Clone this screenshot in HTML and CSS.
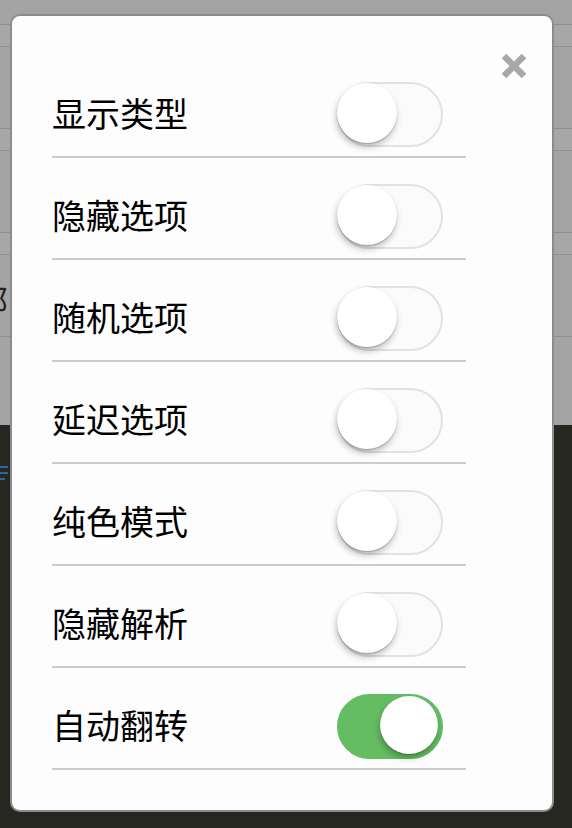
FILE: index.html
```html
<!DOCTYPE html>
<html lang="zh">
<head>
    <meta charset="UTF-8">
    <meta name="viewport" content="width=device-width, initial-scale=1.0">
    <title>设置</title>
    <link rel="stylesheet" href="styles.css">
</head>
<body>
    <!-- 背后的页面 -->
    <div class="page">
        <div class="list">
            <div class="list-top"></div>
            <div class="band"></div>
            <div class="item"></div>
            <div class="band"></div>
            <div class="item"></div>
            <div class="band"></div>
            <div class="item"><span class="item-text">全部</span></div>
            <div class="tail"></div>
        </div>
        <div class="footer">
            <span class="footer-icon"><i></i><i></i><i></i></span>
        </div>
    </div>

    <!-- 设置弹窗 -->
    <div class="modal">
        <span class="close">
            <svg width="28" height="28" viewBox="0 0 28 28">
                <path d="M4 4 L24 24 M24 4 L4 24" stroke="#a8a8a8" stroke-width="6.5" fill="none"/>
            </svg>
        </span>
        <div class="rows">
            <div class="row"><span class="label">显示类型</span><span class="switch"><small></small></span></div>
            <div class="row"><span class="label">隐藏选项</span><span class="switch"><small></small></span></div>
            <div class="row"><span class="label">随机选项</span><span class="switch"><small></small></span></div>
            <div class="row"><span class="label">延迟选项</span><span class="switch"><small></small></span></div>
            <div class="row"><span class="label">纯色模式</span><span class="switch"><small></small></span></div>
            <div class="row"><span class="label">隐藏解析</span><span class="switch"><small></small></span></div>
            <div class="row"><span class="label">自动翻转</span><span class="switch on"><small></small></span></div>
        </div>
    </div>
</body>
</html>
```

FILE: styles.css
```css
html, body {
    margin: 0;
    padding: 0;
}
body {
    font-family: "Noto Sans CJK SC", "Noto Sans", sans-serif;
    background-color: #272722;
    width: 572px;
    height: 828px;
    overflow: hidden;
}
.page {
    display: flex;
    flex-direction: column;
    height: 828px;
}
.list {
    background-color: #a4a4a4;
    height: 425px;
    display: flex;
    flex-direction: column;
}
.list-top {
    height: 24px;
    border-bottom: 1px solid #8f8f8f;
}
.band {
    height: 21px;
    background-color: #a7a7a7;
    border-bottom: 1px solid #8f8f8f;
}
.item {
    height: 81px;
    border-bottom: 1px solid #8f8f8f;
    display: flex;
    align-items: center;
    overflow: hidden;
}
.item-text {
    font-size: 32px;
    color: #222;
    margin-left: -56px;
    margin-top: 6px;
}
.tail {
    flex: 1;
}
.footer {
    flex: 1;
    background-color: #272722;
}
.footer-icon {
    display: flex;
    flex-direction: column;
    gap: 4px;
    margin-top: 41px;
    width: 8px;
}
.footer-icon i {
    display: block;
    height: 2px;
    background-color: #2f62a8;
}
.footer-icon i:last-child {
    width: 5px;
}

/* 弹窗 */
.modal {
    position: absolute;
    top: 14px;
    left: 10px;
    width: 540px;
    height: 794px;
    background-color: #fdfdfd;
    border: 2px solid #8c8c8c;
    border-radius: 10px;
}
.close {
    position: absolute;
    top: 36px;
    right: 24px;
    width: 28px;
    height: 28px;
}
.close svg {
    display: block;
}
.rows {
    padding: 40px 0 0 40px;
    width: 414px;
}
.row {
    display: flex;
    align-items: center;
    justify-content: space-between;
    height: 102px;
    padding-top: 26px;
    padding-bottom: 9px;
    box-sizing: border-box;
    border-bottom: 2px solid #cccccc;
}
.label {
    font-size: 34px;
    color: #000;
    line-height: 1;
    margin-top: -4px;
}
.switch {
    position: relative;
    display: block;
    width: 106px;
    height: 65px;
    box-sizing: border-box;
    margin-right: 23px;
    border: 2px solid #e2e2e2;
    border-radius: 33px;
    background-color: #fbfbfb;
}
.switch small {
    position: absolute;
    top: -1px;
    left: -2px;
    width: 60px;
    height: 60px;
    border-radius: 50%;
    background-color: #fff;
    box-shadow: 0 1px 1px rgba(0, 0, 0, 0.2), -1px 4px 6px rgba(0, 0, 0, 0.25);
}
.switch.on {
    background-color: #64bd63;
    border-color: #64bd63;
}
.switch.on small {
    left: 41px;
    top: 0;
    width: 58px;
    height: 58px;
}
```
